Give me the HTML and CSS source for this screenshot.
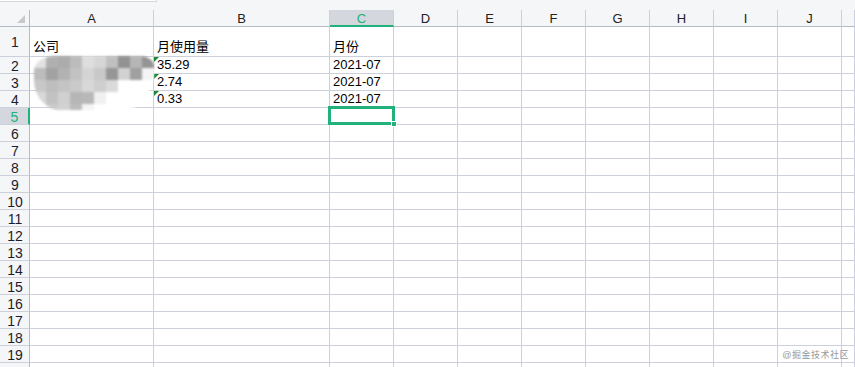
FILE: index.html
```html
<html>
  <head>
    <meta charset="utf-8">
    <link rel="stylesheet" href="styles.css">
  </head>
  <body>
    <div class="topbar"><div class="tab"></div></div>
    <div id="sheet" class="sheet"></div>
    <div class="mosaic" id="mosaic"></div>
    <div class="watermark">@掘金技术社区</div>
    <script src="script.js" type="text/javascript"></script>
  </body>
</html>
```

FILE: styles.css
```css
* {
    box-sizing: border-box;
}
body {
    margin: 0;
    background: #fff;
    font-family: "Liberation Sans", Arial, "Noto Sans CJK SC", sans-serif;
    font-size: 13px;
    color: #000;
    overflow: hidden;
    position: relative;
    width: 855px;
    height: 367px;
}
.topbar {
    height: 10px;
    background: #f5f6f8;
}
.tab {
    width: 157px;
    height: 2px;
    background: #fff;
    border-bottom: 1px solid #d3d7de;
    border-right: 1px solid #d3d7de;
}
.sheet {
    display: grid;
    grid-template-columns: 30px 124px 176px repeat(8, 64px) 1fr;
    grid-template-rows: 17px 30px;
    grid-auto-rows: 17px;
}
.cell {
    border-right: 1px solid #cbd0da;
    border-bottom: 1px solid #cbd0da;
    padding: 0 0 1px 3px;
    display: flex;
    align-items: flex-end;
    white-space: nowrap;
    position: relative;
}
.head {
    background: #f5f6f8;
    color: #222;
    font-size: 13px;
    justify-content: center;
    align-items: center;
    padding: 1px 0 0;
    border-bottom-color: #b3bac8;
}
.rownum {
    background: #f5f6f8;
    color: #1c1c2c;
    font-size: 14px;
    justify-content: center;
    align-items: center;
    padding: 1px 0 0 1px;
    border-right-color: #b3bac8;
}
.corner {
    background: #f5f6f8;
    border-right-color: #b3bac8;
    border-bottom-color: #b3bac8;
}
.corner::after {
    content: "";
    position: absolute;
    right: 4px;
    bottom: 3px;
    border-left: 8px solid transparent;
    border-bottom: 8px solid #c6c8cc;
}
.head.sel {
    background: #d4d7dd;
    color: #20b27a;
    border-bottom: 2px solid #20b27a;
}
.rownum.sel {
    background: #d4d7dd;
    color: #20b27a;
    border-right: 2px solid #20b27a;
}
.flag::before {
    content: "";
    position: absolute;
    left: 0;
    top: 0;
    border-top: 5px solid #1a8a36;
    border-right: 5px solid transparent;
}
.active {
    z-index: 3;
}
.active::after {
    content: "";
    position: absolute;
    left: -2px;
    top: -2px;
    right: -2px;
    bottom: -1px;
    border: 3px solid #20b27a;
}
.active .handle {
    position: absolute;
    right: -4px;
    bottom: -3px;
    width: 6px;
    height: 6px;
    background: #20b27a;
    border: 1px solid #fff;
    z-index: 4;
}
.mosaic {
    position: absolute;
    left: 34px;
    top: 56px;
    width: 120px;
    height: 54px;
    display: grid;
    grid-template-columns: repeat(10, 12px);
    grid-auto-rows: 12px;
    border-radius: 22px 14px 30px 26px / 14px 10px 40px 30px;
    overflow: hidden;
    filter: blur(0.8px);
}
.mosaic div {
    width: 12px;
    height: 12px;
}
.watermark {
    position: absolute;
    right: 6px;
    bottom: 6px;
    font-size: 9px;
    color: #999;
    letter-spacing: 0.5px;
}
```

FILE: script.js
```javascript
var cols = ['A','B','C','D','E','F','G','H','I','J',''];
var data = {
  1: ['公司', '月使用量', '月份'],
  2: ['', '35.29', '2021-07'],
  3: ['', '2.74', '2021-07'],
  4: ['', '0.33', '2021-07']
};

var sheet = document.getElementById('sheet');

function addCell(cls, text){
  var d = document.createElement('div');
  d.className = 'cell ' + cls;
  d.textContent = text || '';
  sheet.appendChild(d);
  return d;
}

addCell('corner', '');
for (var c = 0; c < cols.length; c++){
  addCell('head' + (c == 2 ? ' sel' : ''), cols[c]);
}

for (var r = 1; r <= 20; r++){
  addCell('rownum' + (r == 5 ? ' sel' : ''), r);
  for (var c = 0; c < cols.length; c++){
    var row = data[r] || [];
    var cls = 'data';
    if (c == 1 && r >= 2 && r <= 4) cls += ' flag';
    var d = addCell(cls, row[c]);
    if (r == 5 && c == 2){
      d.className += ' active';
      var h = document.createElement('span');
      h.className = 'handle';
      d.appendChild(h);
    }
  }
}

// blurred company names
var shades = [
  '#e2e2e2','#b0b0b0','#acacac','#bcbcbc','#dedede','#d6d6d6','#c0c0c0','#929292','#b6b6b6','#949494',
  '#bcbcbc','#a2a2a2','#b2b2b2','#c2c2c2','#d4d4d4','#c8c8c8','#969696','#d2d2d2','#a0a0a0','#f4f4f4',
  '#c8c8c8','#bebebe','#c4c4c4','#cacaca','#d8d8d8','#cecece','#dadada','#ffffff','#ffffff','#ffffff',
  '#d8d8d8','#c2c2c2','#d0d0d0','#b6b6b6','#b8b8b8','#f0f0f0','#ffffff','#ffffff','#ffffff','#ffffff',
  '#f6f6f6','#cacaca','#d2d2d2','#bcbcbc','#f4f4f4','#ffffff','#ffffff','#ffffff','#ffffff','#ffffff'
];
var mosaic = document.getElementById('mosaic');
for (var i = 0; i < shades.length; i++){
  var b = document.createElement('div');
  b.style.background = shades[i];
  mosaic.appendChild(b);
}
```
